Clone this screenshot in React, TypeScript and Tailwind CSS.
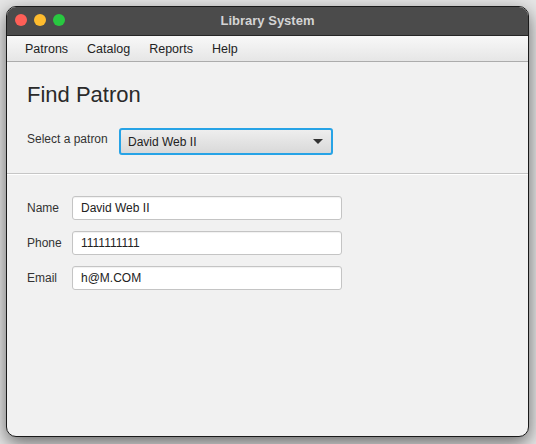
import React from 'react';

const font = { fontFamily: '"Liberation Sans", Arial, sans-serif' };

function Field({ label, value }: { label: string; value: string }) {
  return (
    <div className="flex items-center h-[24px]">
      <span className="w-[45px] text-[12px] text-[#333]">{label}</span>
      <div className="w-[270px] h-[24px] flex items-center px-[8px] text-[12px] text-[#222] bg-white border border-[#c4c4c4] rounded-[3px] shadow-[inset_0_1px_1px_rgba(0,0,0,0.06)]">
        {value}
      </div>
    </div>
  );
}

export default function App() {
  return (
    <div className="w-[536px] h-[444px] bg-[#e6e6e6] pt-[6px] pl-[6px] overflow-hidden" style={font}>
      <div className="w-[523px] h-[431px] rounded-[10px] border border-[#1a1a1a] overflow-hidden bg-[#f1f1f1] flex flex-col shadow-[0_6px_18px_rgba(0,0,0,0.55)]">
        {/* title bar */}
        <div className="relative h-[29px] bg-[#4b4b4b] border-b border-[#262626] flex items-center justify-center shrink-0">
          <div className="absolute left-[8px] top-[7px] flex gap-[7px]">
            <span className="w-[12px] h-[12px] rounded-full bg-[#fe5f57]" />
            <span className="w-[12px] h-[12px] rounded-full bg-[#febc2e]" />
            <span className="w-[12px] h-[12px] rounded-full bg-[#28c840]" />
          </div>
          <span className="text-[13px] font-bold text-[#d4d4d4]">Library System</span>
        </div>
        {/* menu bar */}
        <div className="h-[26px] bg-gradient-to-b from-[#f8f8f8] to-[#e6e6e6] border-b border-[#acacac] flex items-center gap-[19px] pl-[18px] pt-[1px] text-[12.5px] text-[#222] shrink-0">
          <span>Patrons</span>
          <span>Catalog</span>
          <span>Reports</span>
          <span>Help</span>
        </div>
        {/* find section */}
        <div className="px-[20px] pt-[20px] pb-[18px]">
          <h1 className="text-[22px] leading-[26px] text-[#2a2a2a]">Find Patron</h1>
          <div className="flex items-center mt-[20px]">
            <span className="w-[92px] text-[12px] text-[#333] -mt-[6px]">Select a patron</span>
            <div className="w-[214px] h-[27px] rounded-[3px] border-2 border-[#27a3e6] bg-gradient-to-b from-[#eeeeee] to-[#d9d9d9] flex items-center justify-between pl-[7px] pr-[8px] text-[12px] text-[#222]">
              <span>David Web II</span>
              <span className="w-0 h-0 border-l-[5px] border-r-[5px] border-t-[5px] border-l-transparent border-r-transparent border-t-[#333]" />
            </div>
          </div>
        </div>
        <div className="h-[2px] border-t border-[#c6c6c6] bg-white shrink-0" />
        {/* details */}
        <div className="px-[20px] pt-[21px] flex flex-col gap-[11px]">
          <Field label="Name" value="David Web II" />
          <Field label="Phone" value="1111111111" />
          <Field label="Email" value="h@M.COM" />
        </div>
      </div>
    </div>
  );
}
